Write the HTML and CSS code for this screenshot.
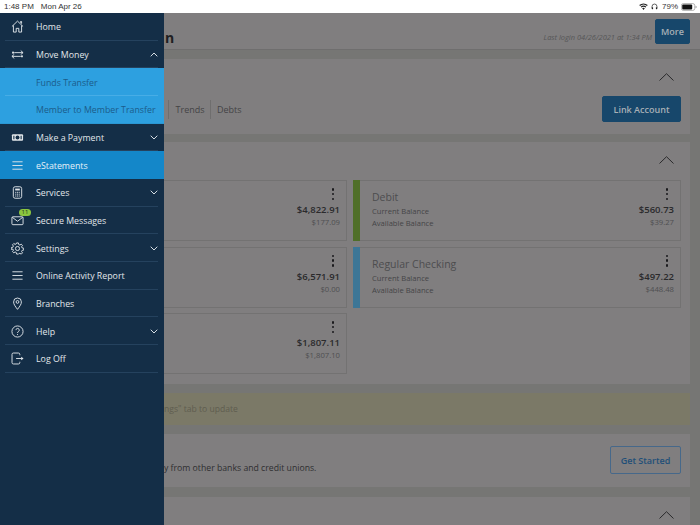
FILE: index.html
```html
<!DOCTYPE html>
<html lang="en">
<head>
<meta charset="utf-8">
<title>Online Banking</title>
<link rel="stylesheet" href="styles.css">
</head>
<body>
<div class="status">
  <span class="status-left"><span>1:48 PM</span><span>Mon Apr 26</span></span>
  <span class="status-right">
    <svg class="st-wifi" viewBox="0 0 12 9"><path d="M6 9 4.2 6.9a2.7 2.7 0 0 1 3.6 0zM3.3 5.9 2.2 4.7a5.7 5.7 0 0 1 7.6 0L8.7 5.9a4.1 4.1 0 0 0-5.4 0zM1.4 3.8.3 2.6a8.6 8.6 0 0 1 11.4 0l-1.1 1.2a7 7 0 0 0-9.2 0z" fill="#222"/></svg>
    <svg class="st-head" viewBox="0 0 10 10"><path d="M1.5 7V5a3.5 3.5 0 0 1 7 0v2" fill="none" stroke="#222" stroke-width="1"/><rect x="1" y="6" width="2" height="3" rx=".7" fill="#222"/><rect x="7" y="6" width="2" height="3" rx=".7" fill="#222"/></svg>
    <span>79%</span>
    <svg class="st-batt" viewBox="0 0 17 8"><rect x=".4" y=".4" width="14.2" height="7.2" rx="2" fill="none" stroke="#999" stroke-width=".8"/><rect x="1.3" y="1.3" width="10.6" height="5.4" rx="1.1" fill="#111"/><path d="M15.5 2.6c.8.2 1.2.7 1.2 1.4s-.4 1.2-1.2 1.4z" fill="#999"/></svg>
  </span>
</div>
<div class="app">
  <nav class="menu">
    <a class="row"><span class="ic"><svg viewBox="0 0 14 14"><path d="M1 7 7 1.2 13 7M2.6 5.8V13H5.6V9H8.4V13H11.4V5.8M10.3 3V1.6H11.4V4" /></svg></span><span class="lb">Home</span></a>
    <a class="row"><span class="ic"><svg viewBox="0 0 14 14"><path d="M3.5 5H13M10.5 2.8 13 5 10.500 7" /><path d="M1 9H10.500M3.500 6.800 1 9 3.500 11.200" /><circle cx="2.200" cy="5" r="1.100" class="fl"/><circle cx="11.800" cy="9" r="1.100" class="fl"/></svg></span><span class="lb">Move Money</span><svg class="chev" viewBox="0 0 8 5"><path d="M.7 4.300 4 1 7.300 4.300"/></svg></a>
    <a class="row sub"><span class="ic"></span><span class="lb">Funds Transfer</span></a>
    <a class="row sub last"><span class="ic"></span><span class="lb">Member to Member Transfer</span></a>
    <a class="row"><span class="ic"><svg viewBox="0 0 14 14"><rect x="1" y="3.500" width="12" height="7" rx="1.200" class="wf"/><circle cx="7" cy="7" r="2.100" class="dk"/><path d="M2.500 5.200h1.200v3.600H2.500zM10.300 5.200h1.200v3.600h-1.200z" class="dk"/></svg></span><span class="lb">Make a Payment</span><svg class="chev" viewBox="0 0 8 5"><path d="M.7.7 4 4 7.300.7"/></svg></a>
    <a class="row active"><span class="ic"><svg viewBox="0 0 14 14"><path d="M1.500 3H12.500M1.500 7H12.500M1.500 11H12.500"/></svg></span><span class="lb">eStatements</span></a>
    <a class="row"><span class="ic"><svg viewBox="0 0 14 14"><rect x="2.500" y=".8" width="9" height="12.400" rx="2"/><rect x="4.500" y="2.800" width="5" height="2" class="fl"/><path d="M4.500 6.800h5M4.500 8.800h5M4.500 10.800h5" stroke-dasharray="1.200 .7"/></svg></span><span class="lb">Services</span><svg class="chev" viewBox="0 0 8 5"><path d="M.7.7 4 4 7.300.7"/></svg></a>
    <a class="row"><span class="ic"><svg viewBox="0 0 14 14"><rect x="1" y="3" width="12" height="8.500" rx="1"/><path d="M1.300 3.500 7 7.800 12.700 3.500"/></svg><span class="badge">11</span></span><span class="lb">Secure Messages</span></a>
    <a class="row"><span class="ic"><svg viewBox="0 0 14 14"><circle cx="7" cy="7" r="2.200"/><path d="M6 1h2l.3 1.700 1.300.6 1.400-1 1.400 1.400-1 1.400.6 1.300 1.700.3v2l-1.700.3-.6 1.300 1 1.400-1.400 1.400-1.400-1-1.300.6L8 13H6l-.3-1.700-1.300-.6-1.400 1-1.400-1.400 1-1.400-.6-1.300L.3 8V6l1.700-.3.6-1.300-1-1.400L3 1.600l1.400 1 1.300-.6z"/></svg></span><span class="lb">Settings</span><svg class="chev" viewBox="0 0 8 5"><path d="M.7.7 4 4 7.300.7"/></svg></a>
    <a class="row"><span class="ic"><svg viewBox="0 0 14 14"><path d="M1.500 3H12.500M1.500 7H12.500M1.500 11H12.500"/></svg></span><span class="lb">Online Activity Report</span></a>
    <a class="row"><span class="ic"><svg viewBox="0 0 14 14"><path d="M7 13.300C4.500 10 2.800 7.800 2.800 5.300a4.200 4.200 0 0 1 8.400 0C11.200 7.800 9.500 10 7 13.300z"/><circle cx="7" cy="5.300" r="1.500"/></svg></span><span class="lb">Branches</span></a>
    <a class="row"><span class="ic"><svg viewBox="0 0 14 14"><circle cx="7" cy="7" r="6"/><path d="M5.300 5.500a1.800 1.800 0 1 1 2.800 1.500c-.7.500-1.100.8-1.100 1.600"/><circle cx="7" cy="10.300" r=".6" class="fl"/></svg></span><span class="lb">Help</span><svg class="chev" viewBox="0 0 8 5"><path d="M.7.7 4 4 7.300.7"/></svg></a>
    <a class="row"><span class="ic"><svg viewBox="0 0 14 14"><path d="M9.500 3.500V2.600A1.500 1.500 0 0 0 8 1.100H2.600A1.500 1.500 0 0 0 1.100 2.600V11.400A1.500 1.500 0 0 0 2.600 12.900H8A1.500 1.500 0 0 0 9.500 11.400V10.500"/><path d="M5.500 7H11.500"/><path d="M11 5 13.500 7 11 9z" class="fl"/></svg></span><span class="lb">Log Off</span></a>
  </nav>

  <main class="main">
    <header class="top">
      <span class="page-title">n</span>
      <span class="login">Last login 04/26/2021 at 1:34 PM</span>
      <button class="btn more">More</button>
    </header>

    <section class="panel links">
      <svg class="up" viewBox="0 0 15 8"><path d="M.5 7.500 7.500.7 14.500 7.500"/></svg>
      <div class="tabrow">
        <div class="tabs"><span>Trends</span><span>Debts</span></div>
        <button class="btn link">Link Account</button>
      </div>
    </section>

    <section class="panel accounts">
      <svg class="up" viewBox="0 0 15 8"><path d="M.5 7.500 7.500.7 14.500 7.500"/></svg>
      <div class="cards">
        <article class="card">
          <div class="info"></div>
          <div class="nums"><span class="dots"><i></i><i></i><i></i></span><b>$4,822.91</b><small>$177.09</small></div>
        </article>
        <article class="card">
          <span class="bar green"></span>
          <div class="info"><h3>Debit</h3><p>Current Balance</p><p>Available Balance</p></div>
          <div class="nums"><span class="dots"><i></i><i></i><i></i></span><b>$560.73</b><small>$39.27</small></div>
        </article>
        <article class="card">
          <div class="info"></div>
          <div class="nums"><span class="dots"><i></i><i></i><i></i></span><b>$6,571.91</b><small>$0.00</small></div>
        </article>
        <article class="card">
          <span class="bar blue"></span>
          <div class="info"><h3>Regular Checking</h3><p>Current Balance</p><p>Available Balance</p></div>
          <div class="nums"><span class="dots"><i></i><i></i><i></i></span><b>$497.22</b><small>$448.48</small></div>
        </article>
        <article class="card">
          <div class="info"></div>
          <div class="nums"><span class="dots"><i></i><i></i><i></i></span><b>$1,807.11</b><small>$1,807.10</small></div>
        </article>
      </div>
    </section>

    <section class="alert">ngs" tab to update</section>

    <section class="panel promo">
      <p>y from other banks and credit unions.</p>
      <button class="btn outline">Get Started</button>
    </section>

    <section class="panel tail">
      <svg class="up" viewBox="0 0 15 8"><path d="M.5 7.500 7.500.7 14.500 7.500"/></svg>
    </section>
  </main>
</div>
</body>
</html>
```
FILE: styles.css
```css
* { box-sizing: border-box; }
html, body { margin: 0; height: 100%; }
body {
  width: 700px;
  height: 525px;
  overflow: hidden;
  display: flex;
  flex-direction: column;
  font-family: "Open Sans", "Liberation Sans", sans-serif;
  background: #767674;
}
.status {
  height: 13px;
  flex: none;
  background: #fff;
  display: flex;
  justify-content: space-between;
  align-items: center;
  padding: 0 3px 0 4px;
  font-family: "Liberation Sans", sans-serif;
  font-size: 8px;
  color: #333;
}
.status-left { display: flex; gap: 7px; }
.status-right { display: flex; align-items: center; gap: 3px; }
.st-wifi { width: 9px; height: 7px; }
.st-head { width: 7px; height: 7px; margin-right: 1px; }
.st-batt { width: 16px; height: 8px; }

.app { flex: 1; display: flex; min-height: 0; }

.menu {
  width: 164px;
  flex: none;
  background: #142e47;
  display: flex;
  flex-direction: column;
}
.row {
  height: 27.67px;
  flex: none;
  display: flex;
  align-items: center;
  padding: 0 6px 0 5px;
  font-size: 8.800px;
  color: #e1e6ea;
  position: relative;
}
.row::after {
  content: "";
  position: absolute;
  left: 5px;
  right: 6px;
  bottom: 0;
  height: 1px;
  background: #25425e;
}
.row .ic {
  width: 24px;
  height: 13px;
  margin-right: 7px;
  display: flex;
  justify-content: center;
  position: relative;
  flex: none;
}
.ic svg {
  width: 13px;
  height: 13px;
  fill: none;
  stroke: #e1e6ea;
  stroke-width: 1;
}
.ic svg .fl { fill: #e1e6ea; stroke: none; }
.ic svg .wf { fill: #e1e6ea; stroke: none; }
.ic svg .dk { fill: #142e47; stroke: none; }
.lb { flex: 1; white-space: nowrap; padding-top: 1px; }
.chev {
  width: 8px;
  height: 5px;
  fill: none;
  stroke: #d6dde3;
  stroke-width: 1;
  flex: none;
}
.row.sub { background: #2da0e0; color: #1c5c8a; }
.row.sub::after { background: #47ade6; }
.row.sub.last::after { left: 0; right: 0; background: #2a97d4; }
.row.active { background: #1487c9; color: #e6f1f8; }
.row.active::after { left: 0; right: 0; background: #1487c9; }
.badge {
  position: absolute;
  left: 14px;
  top: -5px;
  width: 12px;
  height: 7px;
  border-radius: 4px;
  background: #8cc63f;
  color: #1d3a20;
  font-size: 6px;
  line-height: 7px;
  text-align: center;
}

.main {
  flex: 1;
  min-width: 0;
  display: flex;
  flex-direction: column;
  padding-right: 10px;
  overflow: hidden;
}
.top {
  height: 37px;
  flex: none;
  margin-right: -10px;
  padding: 6px 10px 6px 1px;
  background: #807e7f;
  border-bottom: 1px solid #6f6e6e;
  display: flex;
  align-items: flex-start;
}
.page-title {
  font-size: 14px;
  font-weight: 700;
  color: #1f1f22;
  line-height: 14px;
  margin-top: 12px;
  flex: 1;
}
.login {
  font-size: 7.450px;
  font-style: italic;
  color: #565657;
  margin-top: 13px;
  margin-right: 3px;
  line-height: 11px;
}
.btn {
  font-family: inherit;
  border-radius: 2px;
  background: #17476b;
  border: 1px solid #17476b;
  color: #a8b0b6;
  font-size: 9px;
  font-weight: 600;
  padding: 0;
}
.more { width: 35px; height: 25px; }

.panel { background: #807e7f; position: relative; flex: none; }
.up {
  position: absolute;
  right: 16px;
  top: 14px;
  width: 15px;
  height: 8px;
  fill: none;
  stroke: #2a2a2c;
  stroke-width: 1;
}
.links { margin-top: 9px; height: 75px; padding: 37px 9px 0 4px; }
.tabrow { display: flex; justify-content: space-between; align-items: center; height: 26px; }
.tabs { display: flex; font-size: 9px; color: #444446; margin-top: 1px; }
.tabs span { padding: 0 5px 0 6.500px; line-height: 19px; border-left: 1px solid #6f6e6e; }
.link { width: 79px; height: 26px; }

.accounts { margin-top: 8px; height: 242px; padding: 38px 9px 0 0; }
.cards {
  display: grid;
  grid-template-columns: 183px 328px;
  grid-auto-rows: 61px;
  column-gap: 6px;
  row-gap: 5.500px;
}
.card {
  border: 1px solid #737272;
  display: flex;
  position: relative;
  min-width: 0;
}
.card:nth-child(odd) { border-left: 0; }
.bar { width: 7px; flex: none; margin: -1px 0 -1px -1px; }
.bar.green { background: #506f29; }
.bar.blue { background: #3d7696; }
.info { flex: 1; padding: 8px 0 0 12px; min-width: 0; }
.info h3 {
  margin: 0;
  font-size: 10.500px;
  font-weight: 400;
  line-height: 16px;
  color: #4d4d4f;
}
.info p {
  margin: 0;
  font-size: 7.600px;
  line-height: 12px;
  color: #454547;
}
.nums {
  display: flex;
  flex-direction: column;
  align-items: flex-end;
  padding: 7px 6px 0 0;
}
.dots {
  width: 3px;
  height: 12px;
  margin: 0 5.500px 4px 0;
  display: flex;
  flex-direction: column;
  justify-content: space-between;
}
.dots i { width: 2.500px; height: 2.500px; border-radius: 50%; background: #1a1a1c; display: block; }
.nums b { font-size: 9.500px; font-weight: 600; line-height: 12px; color: #2a2a2c; }
.nums small { font-size: 7.700px; line-height: 12px; color: #4f4f51; }

.alert {
  margin-top: 9px;
  height: 32px;
  flex: none;
  background: #7b7967;
  font-size: 8.600px;
  line-height: 32px;
  color: #5f5d4f;
}
.promo {
  margin-top: 9px;
  height: 53px;
  display: flex;
  justify-content: space-between;
  align-items: flex-start;
  padding: 12px 9px 0 0;
}
.promo p {
  margin: 16px 0 0;
  font-size: 8.700px;
  line-height: 13px;
  color: #2f2f31;
}
.outline {
  width: 71px;
  height: 28px;
  background: transparent;
  border: 1px solid #46688a;
  color: #1f4f78;
}
.tail { margin-top: 10px; height: 40px; }
```
